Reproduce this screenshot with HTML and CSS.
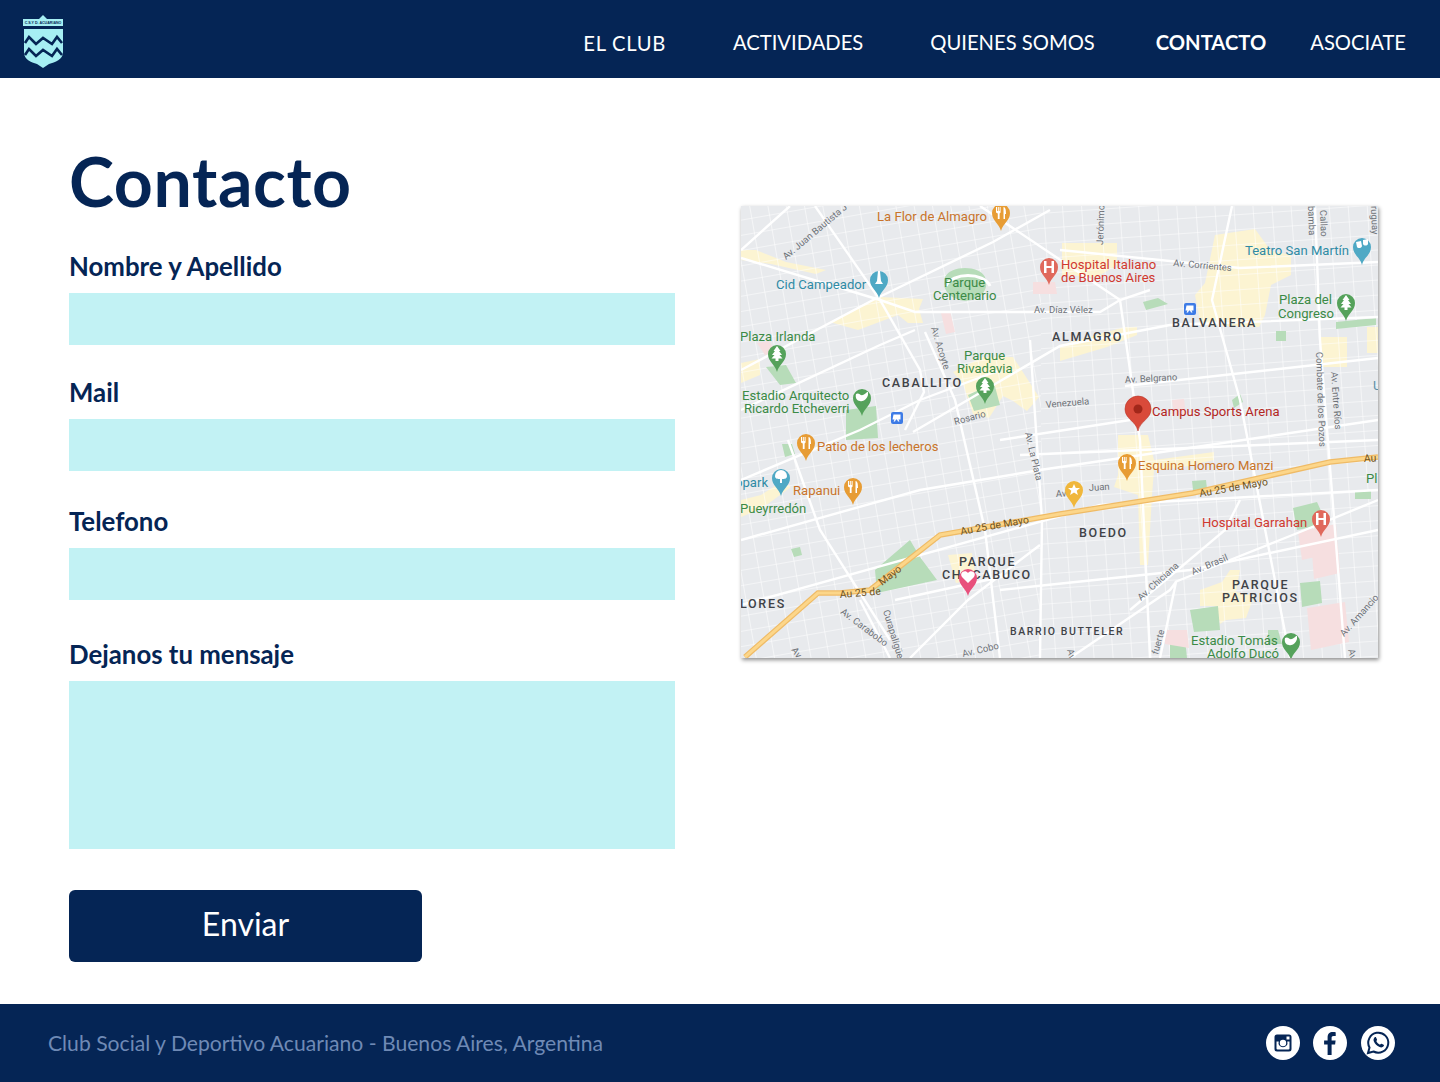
FILE: index.html
```html
<!DOCTYPE html>
<html lang="es">
<head>
<meta charset="utf-8">
<title>Contacto</title>
<link rel="stylesheet" href="styles.css">
</head>
<body>
<header class="topbar">
  <svg class="logo" viewBox="23 14 41 55" width="41" height="55">
    <path class="logo-fill" d="M43 15l4 4h16v7H23v-7h16z"/>
    <text class="logo-text" x="43" y="24.2" text-anchor="middle">C.S.Y D. ACUARIANO</text>
    <path class="logo-fill" d="M24 29h39v23c0 8-8 10-14 12l-6 4-6-4c-6-2-13-4-13-12z"/>
    <path class="logo-wave" d="M25 43l4-6 7 7 7-6 9 6 5-7 5 6M25 55l4-6 7 7 7-6 9 6 5-7 5 6"/>
  </svg>
  <nav class="nav">
    <a class="nav-item nav-low" href="#">EL CLUB</a>
    <a class="nav-item" href="#">ACTIVIDADES</a>
    <a class="nav-item nav-tight" href="#">QUIENES SOMOS</a>
    <a class="nav-item nav-active" href="#">CONTACTO</a>
    <a class="nav-item" href="#">ASOCIATE</a>
  </nav>
</header>

<main class="page">
  <section class="form-col">
    <h1 class="title">Contacto</h1>
    <form class="form">
      <label class="label label-first" for="f1">Nombre y Apellido</label>
      <input class="field" id="f1" type="text">
      <label class="label label-2" for="f2">Mail</label>
      <input class="field" id="f2" type="text">
      <label class="label label-3" for="f3">Telefono</label>
      <input class="field" id="f3" type="text">
      <label class="label label-4" for="f4">Dejanos tu mensaje</label>
      <textarea class="field field-area" id="f4"></textarea>
      <button class="send" type="button">Enviar</button>
    </form>
  </section>

  <figure class="map-wrap">
    <svg class="map" viewBox="741 206 637 452" width="637" height="452">
      <defs>
        <pattern id="gridW" width="18" height="15" patternUnits="userSpaceOnUse" patternTransform="rotate(-10)">
          <path class="grid-line" d="M0 0H18M0 0V15"/>
        </pattern>
        <pattern id="gridE" width="19" height="15" patternUnits="userSpaceOnUse" patternTransform="rotate(-4)">
          <path class="grid-line" d="M0 0H19M0 0V15"/>
        </pattern>
        <path id="pin" d="M0 0C-2-8-9-10-9-18A9 9 0 1 1 9-18C9-10 2-8 0 0Z"/>
        <path id="fork" d="M-5-24h1v4h.8v-4h1v4h.8v-4h1v5.500l-1 1v5.500h-1.800v-5.500l-1.800-1zM2.500-24c2 0 2.500 3 2.500 7h-1v5h-1.500z"/>
        <path id="tree" d="M0-26l3.500 5h-1.500l3 4h-2.500l3 3.500h-4v2.500h-3v-2.500h-4l3-3.500h-2.500l3-4h-1.500z"/>
        <path id="hosp" d="M-5-24h2.500v5h5v-5h2.500v12h-2.500v-5h-5v5h-2.500z"/>
        <path id="stad" d="M-6-22c3-2 4 2 7 1s3-3 5-3v3c-1 4-5 7-8 6-3 0-5-3-4-7z"/>
      </defs>
      <rect class="land" x="741" y="206" width="637" height="452"/>

      <!-- commercial areas, under the streets -->
      <path class="area" d="M1215 235l40-6 16 22 20 4 0 20-20 10-6 30-6 12-58-2-6-30 10-12z"/>
      <path class="area" d="M1062 243l55 0 0 22-20 12-35-2z"/>
      <path class="area" d="M1060 345l65-18 12 0 0 8-30 12-47 14z"/>
      <path class="area" d="M1320 337h27v30h-27z"/>
      <path class="area" d="M1367 327h11v26h-11z"/>
      <path class="area" d="M830 322l50-25 43 2-4 10 4 14-15 0-10-8-40 15z"/>
      <path class="area" d="M741 250l15 0 30 12 40 8 -10 4-45-10-30-4z"/>
      <path class="area" d="M741 363l19-4 0 16-19 8z"/>
      <path class="area" d="M953 372l30-15 30 0 26 40-12 14-14-10-10-5-14 22-16-4-10-30z"/>
      <path class="area" d="M741 500l20-5 22-14 8 6-30 22-20 8z"/>
      <path class="area" d="M1118 435h30l6 25 60-8 0 8-35 8-25 2-2 25 -4 70h-8l-2-70-24-8 4-12z"/>
      <path class="area" d="M1200 590l22-8 8-12 10 0-4 22 18 4-8 22-20 2-6 4-4-18-16 0z"/>
      <path class="area" d="M948 555l24-2 4 26-20 4z"/>

      <rect class="grid-w" x="741" y="206" width="300" height="452"/>
      <rect class="grid-e" x="1041" y="206" width="337" height="452"/>

      <!-- parks -->
      <path class="park" d="M945 277c6-12 34-12 40 0 4 12-2 22-20 24-16-2-24-12-20-24z"/>
      <path class="park" d="M766 367l20-2 10 18-16 2z"/>
      <path class="park" d="M846 410l30-4 2 32-32 2z"/>
      <path class="park" d="M968 395l26-12 6 22-26 6z"/>
      <path class="park" d="M1143 302l15-4 10 6-22 6z"/>
      <path class="park" d="M1336 322l40-4v7l-40 4z"/>
      <path class="park" d="M1276 331h10v10h-10z"/>
      <path class="park" d="M1232 400l8-6 3 8-9 6z"/>
      <path class="park" d="M782 444h10l3 10-10 3z"/>
      <path class="park" d="M791 549l9-2 2 8-8 2z"/>
      <path class="park" d="M910 540l-35 30 2 23 60-13-17-23z"/>
      <path class="park" d="M1192 481l14-1 1 9-14 1z"/>
      <path class="park" d="M1293 508l24-6 10 22-30 6z"/>
      <path class="park" d="M1300 583l20-2 2 22-20 4z"/>
      <path class="park" d="M1190 610l28-4 2 24-26 2z"/>
      <path class="park" d="M1170 643l15-4 2 19h-17z"/>
      <path class="park" d="M1355 491h16v8h-16z"/>
      <path class="park" d="M1268 630h10l4 14h-14z"/>

      <!-- hospitals -->
      <path class="pink" d="M1033 282l22 0 2 12-24 0z"/>
      <path class="pink" d="M941 313l9-2 5 21-9 2z"/>
      <path class="pink" d="M1172 400l12-1 2 16-12 1z"/>
      <path class="pink" d="M1298 532l38-8 2 28-36 8z"/>
      <path class="pink" d="M1312 553l26-6 2 26-26 6z"/>
      <path class="pink" d="M1307 608l38-6 4 40-38 8z"/>
      <path class="pink" d="M1165 630l22 0 2 18-24-4z"/>
      <path class="pink" d="M757 343l12-2 8 12-12 2z"/>

      <!-- main roads -->
      <g class="road">
        <path d="M741 370L873 300 993 242 1050 210"/>
        <path d="M741 258L880 300 915 312H1100L1120 300 1150 290"/>
        <path d="M815 206L880 300 920 370 924 392 905 430"/>
        <path d="M913 432L1060 346 1170 325 1378 317"/>
        <path d="M741 410L880 345 915 330"/>
        <path d="M1125 386L1378 358"/>
        <path d="M1060 250L1240 268 1378 262"/>
        <path d="M741 540L920 490 1040 470 1378 420"/>
        <path d="M741 480L860 430 920 400 1000 370"/>
        <path d="M1020 455L1378 440"/>
        <path d="M1030 340L1042 520 1040 658"/>
        <path d="M980 206L1120 300 1140 440 1150 658"/>
        <path d="M1232 206L1212 300 1240 400 1290 658"/>
        <path d="M1315 206L1320 340 1345 658"/>
        <path d="M788 440L820 530 890 640"/>
        <path d="M790 206L741 250"/>
        <path d="M925 332L955 400 985 530 1000 658"/>
        <path d="M1130 610L1225 530 1240 500"/>
        <path d="M1175 582L1300 532 1378 500"/>
        <path d="M741 605L1100 505 1378 490"/>
        <path d="M1000 590L1190 570 1378 530"/>
        <path d="M895 600L1010 575"/>
        <path d="M910 658L968 600 1040 545"/>
        <path d="M1070 658L1170 590 1176 582 1160 658"/>
        <path d="M860 600L890 658"/>
        <path d="M1000 440L1130 420"/>
      </g>
      <path class="road-thick" d="M946 286c6-14 38-14 44 0"/>

      <!-- motorway -->
      <path class="hw-edge" d="M745 657L818 593H840L870 590 940 535 1060 514 1193 493 1330 462 1378 457"/>
      <path class="hw-core" d="M745 657L818 593H840L870 590 940 535 1060 514 1193 493 1330 462 1378 457"/>

      <!-- road labels -->
      <g class="t-road">
        <text transform="translate(786 260) rotate(-40)">Av. Juan Bautista J</text>
        <text transform="translate(1103 245) rotate(-88)">Jerónimo</text>
        <text transform="translate(1173 266) rotate(5)">Av. Corrientes</text>
        <text x="1034" y="313">Av. Díaz Vélez</text>
        <text transform="translate(931 328) rotate(73)">Av. Acoyte</text>
        <text transform="translate(1125 383) rotate(-3)">Av. Belgrano</text>
        <text transform="translate(1046 408) rotate(-5)">Venezuela</text>
        <text transform="translate(955 425) rotate(-15)">Rosario</text>
        <text transform="translate(1025 433) rotate(77)">Av. La Plata</text>
        <text transform="translate(1056 497) rotate(-3)">Av</text>
        <text transform="translate(1089 491) rotate(-4)">Juan</text>
        <text transform="translate(1316 352) rotate(88)">Combate de los Pozos</text>
        <text transform="translate(1331 372) rotate(86)">Av. Entre Ríos</text>
        <text transform="translate(1308 206) rotate(88)">bamba</text>
        <text transform="translate(1320 210) rotate(88)">Callao</text>
        <text transform="translate(1371 206) rotate(88)">ruguay</text>
        <text transform="translate(840 613) rotate(37)">Av. Carabobo</text>
        <text transform="translate(883 611) rotate(73)">Curapaligüe</text>
        <text transform="translate(963 657) rotate(-13)">Av. Cobo</text>
        <text transform="translate(1141 601) rotate(-42)">Av. Chiciana</text>
        <text transform="translate(1193 575) rotate(-23)">Av. Brasil</text>
        <text transform="translate(1344 637) rotate(-48)">Av. Amancio</text>
        <text transform="translate(1158 655) rotate(-75)">fuerte</text>
        <text transform="translate(791 650) rotate(55)">Av</text>
        <text transform="translate(1348 650) rotate(75)">Av</text>
        <text transform="translate(1067 650) rotate(75)">Av</text>
      </g>
      <g class="t-hw">
        <text transform="translate(961 535) rotate(-10)">Au 25 de Mayo</text>
        <text transform="translate(840 598) rotate(-5)">Au 25 de</text>
        <text transform="translate(882 586) rotate(-38)">Mayo</text>
        <text transform="translate(1200 497) rotate(-10)">Au 25 de Mayo</text>
        <text transform="translate(1364 462) rotate(-3)">Au</text>
      </g>

      <!-- districts -->
      <g class="t-dist">
        <text x="882" y="387">CABALLITO</text>
        <text x="1052" y="341">ALMAGRO</text>
        <text x="1172" y="327">BALVANERA</text>
        <text x="1079" y="537">BOEDO</text>
        <text x="959" y="566">PARQUE</text>
        <text x="942" y="579">CHACABUCO</text>
        <text x="740" y="608">LORES</text>
        <text x="1232" y="589">PARQUE</text>
        <text x="1222" y="602">PATRICIOS</text>
        <text class="t-small" x="1010" y="635">BARRIO BUTTELER</text>
      </g>

      <!-- place labels -->
      <g class="t-place t-orange">
        <text x="877" y="221">La Flor de Almagro</text>
        <text x="817" y="451">Patio de los lecheros</text>
        <text x="793" y="495">Rapanui</text>
        <text x="1138" y="470">Esquina Homero Manzi</text>
      </g>
      <g class="t-place t-teal">
        <text x="776" y="289">Cid Campeador</text>
        <text x="1245" y="255">Teatro San Martín</text>
        <text x="735" y="487">opark</text>
      </g>
      <g class="t-place t-green">
        <text x="944" y="287">Parque</text>
        <text x="933" y="300">Centenario</text>
        <text x="740" y="341">Plaza Irlanda</text>
        <text x="964" y="360">Parque</text>
        <text x="957" y="373">Rivadavia</text>
        <text x="742" y="400">Estadio Arquitecto</text>
        <text x="744" y="413">Ricardo Etcheverri</text>
        <text x="1279" y="304">Plaza del</text>
        <text x="1278" y="318">Congreso</text>
        <text x="740" y="513">Pueyrredón</text>
        <text x="1191" y="645">Estadio Tomás</text>
        <text x="1207" y="658">Adolfo Ducó</text>
        <text x="1366" y="483">Pl</text>
      </g>
      <g class="t-place t-red">
        <text x="1061" y="269">Hospital Italiano</text>
        <text x="1061" y="282">de Buenos Aires</text>
        <text x="1202" y="527">Hospital Garrahan</text>
      </g>
      <text class="t-place t-campus" x="1152" y="416">Campus Sports Arena</text>
      <text class="t-place t-blue" x="1373" y="390">U</text>

      <!-- pins -->
      <g class="pin-o" transform="translate(1001 231)"><use href="#pin"/><use class="gly" href="#fork"/></g>
      <g class="pin-t" transform="translate(879 298)"><use href="#pin"/><path class="gly" d="M-1-27h2l1 10 2 3h-8l2-3z"/></g>
      <g class="pin-r" transform="translate(1049 285)"><use href="#pin"/><use class="gly" href="#hosp"/></g>
      <g class="pin-g" transform="translate(777 372)"><use href="#pin"/><use class="gly" href="#tree"/></g>
      <g class="pin-g" transform="translate(862 416)"><use href="#pin"/><use class="gly" href="#stad"/></g>
      <g class="pin-g" transform="translate(985 404)"><use href="#pin"/><use class="gly" href="#tree"/></g>
      <g class="pin-t" transform="translate(1362 265)"><use href="#pin"/><path class="gly" d="M-6-23l5-1 1 5c0 2-4 3-5 1zM1-25l5-1 0 5c-1 2-4 2-5 0z"/></g>
      <g class="pin-g" transform="translate(1346 321)"><use href="#pin"/><use class="gly" href="#tree"/></g>
      <g class="pin-o" transform="translate(806 461)"><use href="#pin"/><use class="gly" href="#fork"/></g>
      <g class="pin-o" transform="translate(853 505)"><use href="#pin"/><use class="gly" href="#fork"/></g>
      <g class="pin-o" transform="translate(1127 481)"><use href="#pin"/><use class="gly" href="#fork"/></g>
      <g class="pin-t" transform="translate(781 496)"><use href="#pin"/><path class="gly" d="M-6-20a6 6 0 1 1 12 0c0 3-3 3-5 3v4h-2v-4c-2 0-5 0-5-3z"/></g>
      <g class="pin-y" transform="translate(1074 508)"><use href="#pin"/><path class="gly" d="M0-24l1.800 4h4.200l-3.300 2.800 1.200 4.200-3.900-2.400-3.900 2.400 1.200-4.200-3.300-2.800h4.200z"/></g>
      <g class="pin-r" transform="translate(1321 537)"><use href="#pin"/><use class="gly" href="#hosp"/></g>
      <g class="pin-g" transform="translate(1291 660)"><use href="#pin"/><use class="gly" href="#stad"/></g>
      <g class="pin-h" transform="translate(968 596)"><use href="#pin"/><path class="gly" d="M0-13l-6-6c-3-4 3-8 6-4 3-4 9 0 6 4z"/></g>
      <g class="pin-main" transform="translate(1138 431)">
        <path d="M0 0C-2-10-13-12-13-22A13 13 0 1 1 13-22C13-12 2-10 0 0Z"/>
        <circle class="pin-dot" cy="-22" r="4.500"/>
      </g>
      <g transform="translate(897 418)"><rect class="metro" x="-6" y="-6" width="12" height="12" rx="2"/><path class="gly" d="M-3.500-3.500h7v5h-2l1 2h-1.500l-1-2h-1l-1 2h-1.500l1-2h-2z"/></g>
      <g transform="translate(1190 309)"><rect class="metro" x="-6" y="-6" width="12" height="12" rx="2"/><path class="gly" d="M-3.500-3.500h7v5h-2l1 2h-1.500l-1-2h-1l-1 2h-1.500l1-2h-2z"/></g>
    </svg>
  </figure>
</main>

<footer class="footer">
  <p class="foot-text">Club Social y Deportivo Acuariano - Buenos Aires, Argentina</p>
  <div class="social">
    <svg class="soc" viewBox="0 0 34 34" width="34" height="34">
      <circle class="soc-bg" cx="17" cy="17" r="17"/>
      <path class="soc-fg" fill-rule="evenodd" d="M11 8.500h12a2.500 2.500 0 0 1 2.500 2.500v12a2.500 2.500 0 0 1-2.500 2.500H11A2.500 2.500 0 0 1 8.500 23V11A2.500 2.500 0 0 1 11 8.500zM20.500 10.500v3h3v-3zM10.500 15.500V22.500a1 1 0 0 0 1 1h11a1 1 0 0 0 1-1v-7h-2.200a4.500 4.500 0 1 1-8.600 0zM17 13.800a3.200 3.200 0 1 0 0 6.400 3.200 3.200 0 0 0 0-6.400z"/>
    </svg>
    <svg class="soc" viewBox="0 0 34 34" width="34" height="34">
      <circle class="soc-bg" cx="17" cy="17" r="17"/>
      <path class="soc-fg" d="M18.600 29V18.500h3.500l.5-4h-4v-2.600c0-1.200.4-2 2-2h2.100V6.300c-.4 0-1.600-.2-3-.2-3 0-5.100 1.900-5.100 5.200v3.200h-3.500v4h3.500V29z"/>
    </svg>
    <svg class="soc soc-last" viewBox="0 0 34 34" width="34" height="34">
      <circle class="soc-bg" cx="17" cy="17" r="17"/>
      <path class="soc-line" d="M7 27l1.500-5.500a10 10 0 1 1 4 4z"/>
      <path class="soc-fg" d="M13.500 11.500c.6-.6 1.300-.6 1.600 0l.9 2c.2.400 0 .8-.7 1.600.8 1.700 2 2.900 3.700 3.600.8-.9 1.200-1.100 1.600-.9l2 1c.5.200.5.900 0 1.500-.9 1.200-2.400 1.400-4 .8-2.700-1-4.700-3-5.700-5.500-.6-1.600-.4-3 .6-4.100z"/>
    </svg>
  </div>
</footer>
</body>
</html>
```

FILE: styles.css
```css
* { box-sizing: border-box; }
html, body { margin: 0; padding: 0; }
body { width: 1440px; height: 1082px; display: flex; flex-direction: column; background: #fff; font-family: "Lato", "Liberation Sans", sans-serif; color: #052555; overflow: hidden; }

.topbar { flex: 0 0 78px; background: #052555; display: flex; align-items: flex-start; justify-content: space-between; padding: 14px 34px 0 23px; }
.logo { display: block; }
.logo-fill { fill: #a6eff3; }
.logo-wave { fill: none; stroke: #052555; stroke-width: 2.6; }
.logo-text { font: 700 3.600px "Liberation Sans", sans-serif; fill: #052555; }
.nav { display: flex; align-items: center; gap: 67px; padding-top: 16px; }
.nav-item { color: #fff; font-size: 20.200px; line-height: 25px; text-decoration: none; white-space: nowrap; }
.nav-low { position: relative; top: 1px; letter-spacing: .7px; }
.nav-tight { margin-right: -6px; }
.nav-active { font-weight: 700; margin-right: -23px; }

.page { flex: 1; display: flex; padding: 0 0 0 69px; }
.form-col { width: 606px; }
.title { margin: 67px 0 0; font-size: 68px; line-height: 72px; font-weight: 700; letter-spacing: .6px; }
.form { display: flex; flex-direction: column; align-items: flex-start; }
.label { font-size: 25.800px; line-height: 30px; font-weight: 700; margin: 32px 0 12px; }
.label-first { margin-top: 34px; }
.label-2 { margin-top: 32px; }
.label-3 { margin-top: 35px; }
.label-4 { margin-top: 39px; }
.field { display: block; width: 606px; height: 52px; border: 0; padding: 0; background: #c2f2f4; border-radius: 0; resize: none; }
.field-area { height: 168px; }
.send { margin-top: 41px; width: 353px; height: 72px; border: 0; border-radius: 6px; background: #052555; color: #fff; font: 400 32px "Lato", sans-serif; padding: 0 0 5px; }

.map-wrap { margin: 128px 0 0 66px; width: 637px; height: 452px; box-shadow: 1px 2px 4px rgba(0,0,0,.45); }
.map { display: block; }
.land { fill: #e8eaed; }
.grid-w { fill: url(#gridW); }
.grid-e { fill: url(#gridE); }
.grid-line { fill: none; stroke: #fff; stroke-width: 1.100; }
.area { fill: #fcf4d2; }
.park { fill: #b7dcb9; }
.pink { fill: #f6dfe0; }
.road path { fill: none; stroke: #fff; stroke-width: 2.400; }
.road-thick { fill: none; stroke: #fff; stroke-width: 3; }
.hw-edge { fill: none; stroke: #efbb66; stroke-width: 5.500; }
.hw-core { fill: none; stroke: #fcd68a; stroke-width: 3; }

.map text { font-family: "Roboto", "Liberation Sans", sans-serif; }
.t-road { font-size: 9.500px; fill: #6e7278; }
.t-hw { font-size: 10.500px; fill: #6f5424; }
.t-dist { font-size: 12.500px; font-weight: 500; letter-spacing: 1.700px; fill: #3f4247; }
.t-dist .t-small { font-size: 10.500px; letter-spacing: 1.600px; }
.t-place { font-size: 13.100px; }
.t-orange { fill: #c9742a; }
.t-teal { fill: #2f8ba5; }
.t-green { fill: #3b8a46; }
.t-red { fill: #d0392f; }
.t-campus { fill: #b3261e; }
.t-blue { fill: #5a8fa8; }
.gly { fill: #fff; }
.pin-o use { fill: #e79c34; }
.pin-t use { fill: #4fa9c5; }
.pin-r use { fill: #e0695c; }
.pin-g use { fill: #55a25b; }
.pin-y use { fill: #f0b73c; }
.pin-h use { fill: #e8507c; }
.pin-o .gly, .pin-t .gly, .pin-r .gly, .pin-g .gly, .pin-y .gly, .pin-h .gly { fill: #fff; }
.pin-main path { fill: #d94a3a; stroke: #b8352a; stroke-width: .6; }
.pin-dot { fill: #a2271a; }
.metro { fill: #3d7be6; }

.footer { flex: 0 0 78px; background: #052555; display: flex; align-items: center; justify-content: space-between; padding: 0 45px 0 48px; }
.foot-text { margin: 0; font-size: 21.150px; color: #6f8ab5; }
.social { display: flex; gap: 13px; }
.soc { display: block; }
.soc-last { margin-left: 1px; }
.soc-bg { fill: #fff; }
.soc-fg { fill: #052555; }
.soc-line { fill: none; stroke: #052555; stroke-width: 2; }
```
